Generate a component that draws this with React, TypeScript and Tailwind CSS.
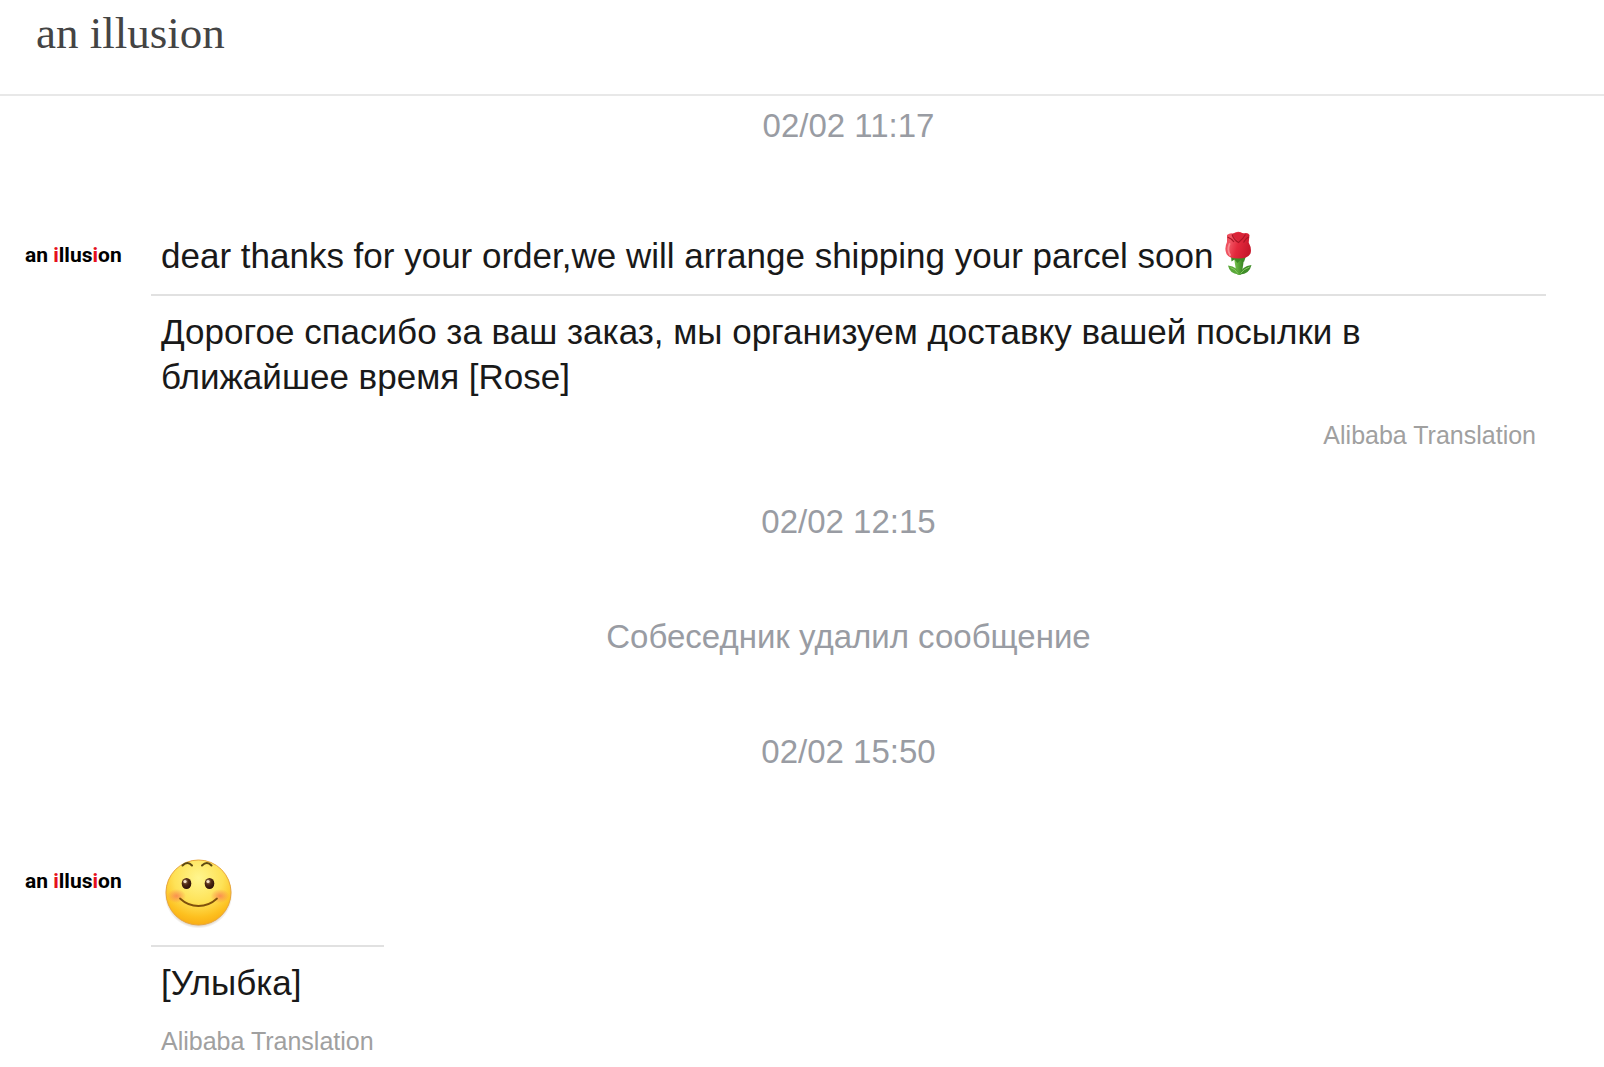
import type { ReactNode } from "react";

function Rose() {
  return (
    <svg viewBox="0 0 30 46" className="-mt-0.5 ml-[10px] h-[46px] w-[30px] shrink-0" role="img" aria-label="Rose">
      <defs>
        <linearGradient id="petal" x1="0" x2="1" y1="0.1" y2="0.4">
          <stop offset="0" stopColor="#ec4a58" />
          <stop offset="0.25" stopColor="#f05563" />
          <stop offset="0.55" stopColor="#e4293d" />
          <stop offset="1" stopColor="#c8182c" />
        </linearGradient>
        <linearGradient id="stem" x1="0" x2="1" y1="0" y2="0">
          <stop offset="0" stopColor="#7cc552" />
          <stop offset="0.5" stopColor="#55a336" />
          <stop offset="1" stopColor="#35801f" />
        </linearGradient>
      </defs>
      <path d="M10 27h10l-2 15.500q-3 3-5.500 0z" fill="url(#stem)" />
      <path d="M14.500 43.500q-.5-8-10.500-9Q5.500 42.500 14.500 43.500z" fill="#5aa83a" />
      <path d="M16 43.500q1.500-8.500 11.500-9.500-2 9-11.500 9.500z" fill="#3f8d29" />
      <path d="M6.500 36.500q5 1.500 7.500 6M25.500 36q-6 2-9 6.500" stroke="#86c95f" fill="none" />
      <path d="M7 25l.5 5.500 3-2 3 3.500 3-3 3.500 2 2-6z" fill="#3c8a26" />
      <path
        d="M3 4Q6 1.500 9 2.500q5.500-3.500 10 0 5-1.500 6.500 1.500l-.8 7.500q3.300 6 1.800 11Q24 27.500 14.500 27.500T2.500 23Q0 17.500 3 11z"
        fill="url(#petal)"
      />
      <path d="M8 3q6.500-3 13 0 0 4-6 7-6-3-7-7z" fill="#d92438" />
      <path
        d="M8 3.500q1.500 5 6.500 8Q19 8 21.500 3.500M3.500 6q4 1.500 6.500 5M25 6q-3 1-5.500 5.500"
        stroke="#a81525"
        strokeWidth="1.100"
        fill="none"
      />
      <path d="M5.500 13q-2.500 6 .5 11" stroke="#f78c93" strokeWidth="1.800" strokeLinecap="round" fill="none" />
    </svg>
  );
}

function Smile() {
  return (
    <svg viewBox="0 -1 70 70" className="ml-[3px] block size-[70px]" role="img" aria-label="Smile">
      <defs>
        <radialGradient id="face" cx="0.5" cy="0.28" r="0.75">
          <stop offset="0" stopColor="#fff68f" />
          <stop offset="0.5" stopColor="#fee257" />
          <stop offset="0.8" stopColor="#fdc01f" />
          <stop offset="1" stopColor="#f8a912" />
        </radialGradient>
        <radialGradient id="cheek">
          <stop offset="0" stopColor="#f98352" stopOpacity="0.85" />
          <stop offset="1" stopColor="#f98352" stopOpacity="0" />
        </radialGradient>
        <radialGradient id="shade">
          <stop offset="0.85" stopColor="#8a6a40" stopOpacity="0.45" />
          <stop offset="1" stopColor="#8a6a40" stopOpacity="0" />
        </radialGradient>
        <radialGradient id="eye" cx="0.38" cy="0.32" r="0.7">
          <stop offset="0" stopColor="#a8845f" />
          <stop offset="0.45" stopColor="#4e2814" />
          <stop offset="1" stopColor="#2c1008" />
        </radialGradient>
      </defs>
      <circle cx="34.500" cy="34.500" r="34" fill="url(#shade)" />
      <circle cx="34.500" cy="32.500" r="32.500" fill="url(#face)" stroke="#e8a63c" strokeWidth="1" />
      <ellipse cx="12.500" cy="36" rx="9.500" ry="7" fill="url(#cheek)" />
      <ellipse cx="56" cy="36" rx="9.500" ry="7" fill="url(#cheek)" />
      <path d="M18.500 5.500q5-5 9.500 0M38 5.500q5-5 9.500 0" stroke="#5e4a12" strokeWidth="2" strokeLinecap="round" fill="none" />
      <ellipse cx="22.500" cy="23.500" rx="4.800" ry="5.500" fill="url(#eye)" />
      <ellipse cx="45.500" cy="23.500" rx="4.800" ry="5.500" fill="url(#eye)" />
      <circle cx="21" cy="21.500" r="1.600" fill="#f4e3cb" />
      <circle cx="44" cy="21.500" r="1.600" fill="#f4e3cb" />
      <path d="M16 38.500q8 7.500 18.500 7.500T53 38.500" stroke="#80510c" strokeWidth="1.800" strokeLinecap="round" fill="none" />
    </svg>
  );
}

function ShopLogo() {
  return (
    <div className="w-[151px] shrink-0 pt-2 pl-[25px] font-['Roboto',sans-serif] text-[21px] leading-7 font-bold whitespace-nowrap text-black">
      an <span className="text-[#e5101c]">i</span>llus<span className="text-[#e5101c]">i</span>on
    </div>
  );
}

function Notice({ children }: { children: ReactNode }) {
  return <p className="pr-[58px] pl-[151px] text-center text-[33px] leading-10 text-[#999ca3]">{children}</p>;
}

type MessageProps = { original: ReactNode; translation: string; wide?: boolean };

function Message({ original, translation, wide }: MessageProps) {
  return (
    <article className="flex items-start pr-[58px] text-[35px] leading-[45px] text-[#191919]">
      <ShopLogo />
      <div className={wide ? "min-w-0 flex-1" : "min-w-0"}>
        <div className="border-b-2 border-[#e1e1e1] px-[10px] pb-4">{original}</div>
        <p className="px-[10px] pt-[13px]">{translation}</p>
        <p className={wide ? "mt-5 px-[10px] text-right text-[25px] leading-8 text-[#a0a0a0]" : "mt-5 px-[10px] text-[25px] leading-8 text-[#a0a0a0]"}>
          Alibaba Translation
        </p>
      </div>
    </article>
  );
}

export default function App() {
  return (
    <div className="min-h-screen bg-white font-['Liberation_Sans',Arial,sans-serif]">
      <header className="border-b-2 border-[#e8e8e8] px-9 pt-[7px] pb-[35px]">
        <h1 className="font-['Liberation_Serif',serif] text-[45px] leading-[52px] text-[#444]">an illusion</h1>
      </header>
      <main className="pt-[10px]">
        <Notice>02/02 11:17</Notice>
        <div className="mt-[87px]">
          <Message
            wide
            original={
              <div className="flex h-[45px] items-start">
                <p>dear thanks for your order,we will arrange shipping your parcel soon</p>
                <Rose />
              </div>
            }
            translation="Дорогое спасибо за ваш заказ, мы организуем доставку вашей посылки в ближайшее время [Rose]"
          />
        </div>
        <div className="mt-[51px] flex flex-col gap-[75px]">
          <Notice>02/02 12:15</Notice>
          <Notice>Собеседник удалил сообщение</Notice>
          <Notice>02/02 15:50</Notice>
        </div>
        <div className="mt-[87px]">
          <Message original={<Smile />} translation="[Улыбка]" />
        </div>
      </main>
    </div>
  );
}
